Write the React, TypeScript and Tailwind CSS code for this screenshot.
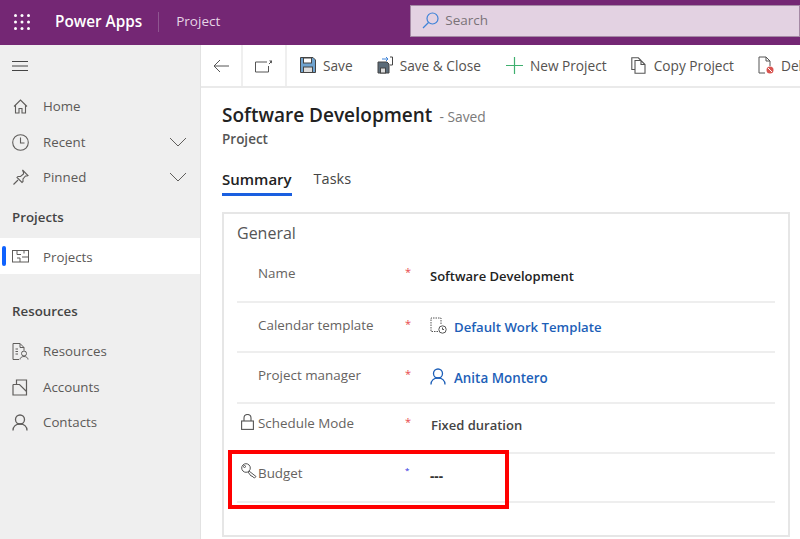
import React from "react";

const font = "font-['Open_Sans','Noto_Sans',sans-serif]";

function NavItem({ icon, label, chevron, active, h = "h-9" }: { icon: React.ReactNode; label: string; chevron?: boolean; active?: boolean; h?: string }) {
  return (
    <div className={`relative flex items-center ${h} pl-3 pr-[13px] ${active ? "bg-white" : ""}`}>
      {active && <div className="absolute left-[2px] top-[8px] h-[20px] w-[4px] rounded-sm bg-[#0f62fe]" />}
      <div className="w-[31px] text-[#5f5d5b] flex items-center">{icon}</div>
      <span className={`${active ? "mt-[3px]" : "mt-[2px]"} text-[13.3px] text-[#5c5a58] flex-1`}>{label}</span>
      {chevron && (
        <svg width="18" height="10" viewBox="0 0 18 10" fill="none" stroke="#5f5d5b" strokeWidth="1">
          <path d="M1 1l8 8 8-8" />
        </svg>
      )}
    </div>
  );
}

function Tool({ icon, label }: { icon: React.ReactNode; label: string }) {
  return (
    <div className="flex items-center gap-[7px] shrink-0 whitespace-nowrap text-[13.7px] text-[#55524f]">
      {icon}
      <span className="mt-[2px]">{label}</span>
    </div>
  );
}

function Row({ label, icon, star = "text-[#e8484c] text-[11px]", h, labelPt, starPt, children }: { label: string; icon?: React.ReactNode; star?: string; h: string; labelPt: string; starPt: string; children: React.ReactNode }) {
  return (
    <div className={`relative flex ${h} border-b-2 border-[#eeeeee]`}>
      <div className={`w-[168px] shrink-0 relative pl-[21px] ${labelPt} text-[13.4px] text-[#66635f]`}>
        {icon && <span className="absolute left-[4px] top-[9px]">{icon}</span>}
        {label}
      </div>
      <div className={`w-[25px] shrink-0 ${starPt} leading-[16px] ${star}`}>*</div>
      {children}
    </div>
  );
}

const UserIcon = ({ color, w = 16 }: { color: string; w?: number }) => (
  <svg width={w} height={w + 1} viewBox="0 0 16 17" fill="none" stroke={color} strokeWidth="1.300">
    <circle cx="8" cy="5.500" r="4.500" />
    <path d="M1 16.500c0-4 3-6.500 7-6.500s7 2.500 7 6.500" />
  </svg>
);

export default function App() {
  return (
    <div className={`${font} relative w-[800px] h-[539px] overflow-hidden bg-white flex flex-col`}>
      <header className="h-[45px] shrink-0 bg-[#742774] flex items-center text-white pb-[2px]">
        <svg width="16" height="16" viewBox="0 0 16 16" className="ml-[14px] fill-white">
          {[1.5, 8, 14.5].flatMap((y) => [1.5, 8, 14.5].map((x) => <circle key={`${x}-${y}`} cx={x} cy={y} r="1.500" />))}
        </svg>
        <span className="ml-[25px] text-[15.3px] font-semibold">Power Apps</span>
        <div className="ml-[16px] h-[20px] w-px bg-[#8f5590]" />
        <span className="ml-[17px] text-[13.5px] text-[#e6d5e6]">Project</span>
        <div className="ml-[190px] mt-[-2px] h-[32px] flex-1 bg-[#e3d2e2] border border-[#a58aa5] flex items-center pl-[11px]">
          <svg width="17" height="17" viewBox="0 0 17 17" fill="none" stroke="#3f83d8" strokeWidth="1.200">
            <circle cx="10.500" cy="6.500" r="5.500" />
            <path d="M6.500 10.500L1 16" />
          </svg>
          <span className="ml-[6px] text-[13.5px] text-[#7a7278]">Search</span>
        </div>
      </header>
      <div className="flex flex-1 min-h-0">
        <aside className="w-[201px] shrink-0 bg-[#efefef] border-r border-[#e2e2e2] pt-[4px]">
          <div className="h-[34px] pl-3 flex items-center">
            <svg width="16" height="12" viewBox="0 0 16 12" stroke="#444" strokeWidth="1">
              <path d="M0 1.500h16M0 6h16M0 10.500h16" />
            </svg>
          </div>
          <div className="mt-[5px]">
            <NavItem
              label="Home"
              icon={
                <svg width="15" height="15" viewBox="0 0 15 15" fill="none" stroke="currentColor" strokeWidth="1.100" className="ml-[1px]">
                  <path d="M1 7.500L7.500 1 14 7.500M2.500 6v8h3.500V9.500h3V14h3.500V6" />
                </svg>
              }
            />
            <NavItem
              label="Recent"
              chevron
              icon={
                <svg width="17" height="17" viewBox="0 0 17 17" fill="none" stroke="currentColor" strokeWidth="1.100">
                  <circle cx="8.500" cy="8.500" r="7.800" />
                  <path d="M8.500 3.500v5.500h4" />
                </svg>
              }
            />
            <NavItem
              label="Pinned"
              chevron
              h="h-[34px]"
              icon={
                <svg width="16" height="16" viewBox="0 0 16 16" fill="none" stroke="currentColor" strokeWidth="1.100" className="ml-[1px]">
                  <path d="M9.500 1l5.500 5.500-1 .500-1.500 0-2.500 3 0 2.500-1 1-5-5 1-1 2.500 0 3-2.500 0-1.500zM5 11l-4.500 4.500" />
                </svg>
              }
            />
          </div>
          <div className="mt-[14px] h-[30px] pl-3 text-[13.3px] font-semibold text-[#444]">Projects</div>
          <NavItem
            active
            label="Projects"
            icon={
              <svg width="17" height="13" viewBox="0 0 17 13" fill="none" stroke="currentColor" strokeWidth="1">
                <rect x="0.500" y="0.500" width="16" height="11.500" />
                <path d="M5 .5v4h4M5 8h3v4M12 .5v3M12 7h4.500M10 7h2" />
              </svg>
            }
          />
          <div className="mt-[28px] h-[31px] pl-3 text-[13.3px] font-semibold text-[#444]">Resources</div>
          <NavItem
            label="Resources"
            icon={
              <svg width="17" height="17" viewBox="0 0 17 17" fill="none" stroke="currentColor" strokeWidth="1">
                <path d="M7 16.500H1V.5h7l4 4v3M8 .5v4h4M3.500 6H6M3.500 8.500H6M3.500 11H6" />
                <circle cx="12" cy="10.500" r="2.500" />
                <path d="M8 16.500c0-2 2-3 4-3s4 1 4 3" />
              </svg>
            }
          />
          <NavItem
            label="Accounts"
            icon={
              <svg width="16" height="17" viewBox="0 0 16 17" fill="none" stroke="currentColor" strokeWidth="1.200">
                <path d="M1 5.500V16h13.500V1H4.500V5.500H1h6.500l7 7" />
              </svg>
            }
          />
          <NavItem icon={<UserIcon color="currentColor" />} label="Contacts" h="h-[34px]" />
        </aside>
        <main className="flex-1 min-w-0 flex flex-col">
          <div className="h-[43px] shrink-0 flex items-center border-b-2 border-[#eaeaea] overflow-hidden">
            <div className="w-[42px] h-full shrink-0 border-r-2 border-[#efefef] flex items-center justify-center">
              <svg width="16" height="14" viewBox="0 0 16 14" fill="none" stroke="#555" strokeWidth="1">
                <path d="M16 7H1M7 1L1 7l6 6" />
              </svg>
            </div>
            <div className="w-[44px] h-full shrink-0 border-r-2 border-[#efefef] flex items-center justify-center">
              <svg width="18" height="14" viewBox="0 0 18 14" fill="none" stroke="#555" strokeWidth="1">
                <path d="M12 3H.5v10h13V7" />
                <path d="M14 1.500h3v3z" fill="#555" stroke="none" />
                <path d="M14 5l2-2" />
              </svg>
            </div>
            <div className="flex items-center gap-[24px] pl-[13px]">
              <Tool
                label="Save"
                icon={
                  <svg width="16" height="16" viewBox="0 0 16 16">
                    <path d="M.5.500h12.500l2.500 2.500v12.500H.5z" fill="#6fa3cf" stroke="#444" />
                    <rect x="3.500" y="1" width="8" height="5" fill="#fff" stroke="#444" />
                    <rect x="3.500" y="10" width="9" height="5.500" fill="#ddd" stroke="#444" />
                  </svg>
                }
              />
              <Tool
                label="Save & Close"
                icon={
                  <svg width="16" height="18" viewBox="0 0 16 18">
                    <path d="M1 6h9l2 2v9H1z" fill="#5b6b78" stroke="#444" />
                    <rect x="3.500" y="12" width="5" height="5" fill="#ddd" stroke="#444" />
                    <path d="M5 3h6m-2-2 2 2-2 2" fill="none" stroke="#3f83d8" />
                    <path d="M13 1h2.500v8H13" fill="none" stroke="#444" />
                  </svg>
                }
              />
              <Tool
                label="New Project"
                icon={
                  <svg width="18" height="17" viewBox="0 0 18 17" fill="none" stroke="#3fb06f" strokeWidth="1.200">
                    <path d="M9.500 0v17M1 8.500h17" />
                  </svg>
                }
              />
              <Tool
                label="Copy Project"
                icon={
                  <svg width="16" height="17" viewBox="0 0 16 17" fill="none" stroke="#555" strokeWidth="1.100">
                    <path d="M4 12.500H.8V.8h6.500L10 3.500M4 3.500h6l4 4v8.800H4zM10 3.500v4h4" />
                  </svg>
                }
              />
              <Tool
                label="Delete"
                icon={
                  <svg width="16" height="18" viewBox="0 0 16 18" fill="none">
                    <path d="M7 17H1V1h7l4 4v5M8 1v4h4" stroke="#555" />
                    <circle cx="12" cy="14" r="3.500" fill="#d9534f" />
                    <path d="M10 12l4 4" stroke="#fff" />
                  </svg>
                }
              />
            </div>
          </div>
          <div className="flex-1 min-h-0 pl-[21px] pr-[10px]">
            <div className="pt-[13px] flex items-baseline h-[41px]">
              <h1 className="text-[19px] font-semibold text-[#222]">Software Development</h1>
              <span className="ml-[7px] text-[13.8px] text-[#7a7a7a]">- Saved</span>
            </div>
            <div className="text-[13.500px] font-semibold text-[#555] h-[30px] leading-[20px]">Project</div>
            <div className="flex gap-[22px] h-[53px]">
              <div className="h-[37px] border-b-[3px] border-[#1a5fe0] pt-[9px] text-[15px] font-semibold text-[#222]">Summary</div>
              <div className="pt-[9px] text-[14.500px] text-[#444]">Tasks</div>
            </div>
            <section className="h-[325px] border-2 border-[#e6e6e6] px-[13px] pt-[7px]">
              <div className="h-[36px] text-[16px] text-[#555]">General</div>
              <Row label="Name" h="h-[46px]" labelPt="pt-[6px]" starPt="pt-[7px]">
                <div className="pt-[10px] text-[13px] font-semibold text-[#222]">Software Development</div>
              </Row>
              <Row label="Calendar template" h="h-[50px]" labelPt="pt-[12px]" starPt="pt-[13px]">
                <div className="pt-[15px] flex items-start">
                  <svg width="17" height="17" viewBox="0 0 17 17" fill="none" stroke="#555" className="mt-[-1px]">
                    <path d="M8 14.500H1V1h10v7" strokeDasharray="1.500 1" />
                    <circle cx="12.500" cy="12.500" r="3.700" />
                    <path d="M12.500 10.500v2h1.500" />
                  </svg>
                  <span className="ml-[7px] text-[13.200px] font-semibold text-[#1d5fb8]">Default Work Template</span>
                </div>
              </Row>
              <Row label="Project manager" h="h-[51px]" labelPt="pt-[12px]" starPt="pt-[13px]">
                <div className="pt-[15px] flex items-start">
                  <UserIcon color="#1d5fb8" />
                  <span className="ml-[8px] text-[13.400px] font-semibold text-[#1d5fb8]">Anita Montero</span>
                </div>
              </Row>
              <Row
                label="Schedule Mode"
                h="h-[50px]"
                labelPt="pt-[9px]"
                starPt="pt-[10px]"
                icon={
                  <svg width="13" height="16" viewBox="0 0 13 16" fill="none" stroke="#555" strokeWidth="1.100" className="mt-[1px]">
                    <rect x="0.600" y="7" width="11.800" height="8.400" />
                    <path d="M3 7V4a3.500 3.500 0 0 1 7 0v3" />
                  </svg>
                }
              >
                <div className="pt-[12px] pl-px text-[13px] font-semibold text-[#444]">Fixed duration</div>
              </Row>
              <Row
                label="Budget"
                h="h-[49px]"
                star="text-[#2a2ae0] text-[8px]"
                labelPt="pt-[9px]"
                starPt="pt-[8px]"
                icon={
                  <svg width="16" height="16" viewBox="0 0 16 16" fill="none" stroke="#555">
                    <circle cx="5" cy="5" r="4.300" />
                    <path d="M8 8l7 5.500-1.500 1.500-1.500-1-1-1-1 0-3-4" />
                    <circle cx="3.500" cy="3.500" r="1" />
                  </svg>
                }
              >
                <div className="pt-[12px] text-[13.500px] font-bold text-[#333]">---</div>
              </Row>
            </section>
          </div>
        </main>
      </div>
      <div className="absolute left-[228px] top-[450px] w-[281px] h-[59px] border-[4px] border-[#ff0000]" />
    </div>
  );
}
